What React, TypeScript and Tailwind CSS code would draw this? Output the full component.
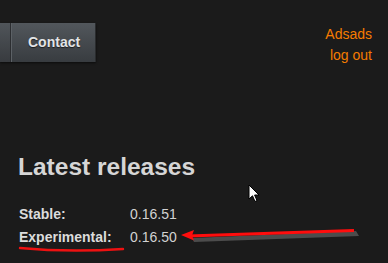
import React from 'react';

const App: React.FC = () => {
  return (
    <div
      className="relative w-[388px] h-[263px] overflow-hidden bg-[#1b1b1b] text-[#d4d4d4]"
      style={{ fontFamily: '"Liberation Sans", Arial, sans-serif' }}
    >
      <header className="flex justify-between items-start pt-[23px]">
        <nav className="flex h-[39px] shadow-[0_1px_2px_rgba(0,0,0,0.6)]">
          <div className="w-[11px] bg-gradient-to-b from-[#50555a] to-[#383b3f] border-r border-[#2c2e31]" />
          <a className="flex items-center pl-[16px] pr-[15px] bg-gradient-to-b from-[#52575c] to-[#383c40] border-l border-[#5c6166] border-r border-r-[#2a2c2e] text-[14px] font-bold text-[#e2e4e6] [text-shadow:0_1px_1px_rgba(0,0,0,0.6)]">
            Contact
          </a>
        </nav>
        <div className="flex flex-col items-end pr-[16px] pt-[1px] text-[14px] leading-[21px] text-[#f57c00]">
          <a>Adsads</a>
          <a>log out</a>
        </div>
      </header>

      <main className="pl-[18px] pt-[86px]">
        <h2 className="text-[24.5px] leading-[29px] font-bold text-[#d6d6d6]">Latest releases</h2>
        <div className="mt-[22px] pl-[1px] text-[14px] leading-[23px]">
          <div className="flex">
            <span className="w-[111px] font-bold text-[#dcdcdc]">Stable:</span>
            <span className="text-[#d2d2d2]">0.16.51</span>
          </div>
          <div className="flex">
            <span className="w-[111px] font-bold text-[#dcdcdc]">Experimental:</span>
            <span className="text-[#d2d2d2]">0.16.50</span>
          </div>
        </div>
      </main>

      {/* red underline */}
      <svg className="absolute left-[18px] top-[244px]" width="110" height="10" viewBox="0 0 110 10">
        <path d="M2 4 Q 50 8.5 105 5" stroke="#ee1111" strokeWidth="2.4" fill="none" strokeLinecap="round" />
      </svg>

      {/* arrow with shadow */}
      <svg className="absolute left-[178px] top-[224px]" width="190" height="22" viewBox="0 0 190 22">
        <path d="M14 14 L178 7 L181 12 L16 18 Z" fill="#555" opacity="0.85" />
        <path d="M10 12 L176 6.5" stroke="#ff0d0d" strokeWidth="3" fill="none" />
        <path d="M3 11 L16 6 L14 11.5 L16 16.5 Z" fill="#ff0d0d" />
      </svg>

      {/* mouse cursor */}
      <svg className="absolute left-[248px] top-[184px]" width="13" height="20" viewBox="0 0 13 20">
        <path d="M1 1 L1 15 L4.5 11.8 L7 17.5 L9 16.6 L6.6 11 L11 11 Z" fill="#fff" stroke="#000" strokeWidth="1" strokeLinejoin="round" />
      </svg>
    </div>
  );
};

export default App;
